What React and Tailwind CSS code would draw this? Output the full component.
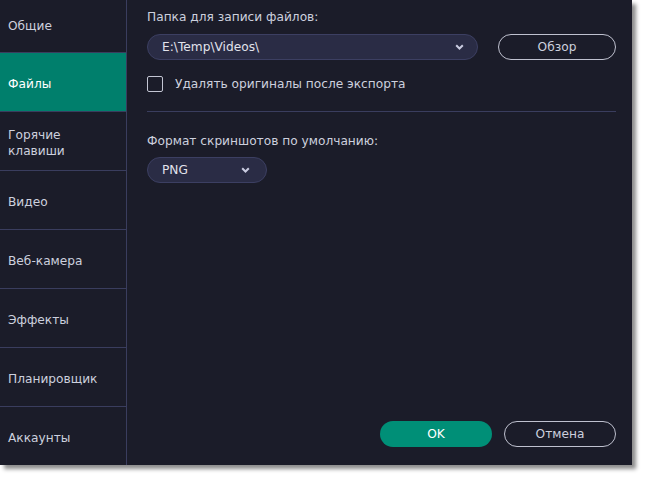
import React from "react";

const navItems = [
  { label: "Общие", h: "h-[53px]", first: true },
  { label: "Файлы", h: "h-[59px]", active: true },
  { label: "Горячие клавиши", h: "h-[59px]", two: true },
  { label: "Видео", h: "h-[59px]" },
  { label: "Веб-камера", h: "h-[59px]" },
  { label: "Эффекты", h: "h-[59px]" },
  { label: "Планировщик", h: "h-[59px]" },
  { label: "Аккаунты", h: "h-[58px]", last: true },
];

const Chevron = () => (
  <svg width="9" height="6" viewBox="0 0 9 6" className="text-[#c9cbe0]">
    <path d="M1.2 1.2 L4.5 4.5 L7.8 1.2" fill="none" stroke="currentColor" strokeWidth="2" />
  </svg>
);

export default function App() {
  return (
    <div className="w-[647px] h-[481px] bg-white" style={{ fontFamily: "'DejaVu Sans', Verdana, sans-serif" }}>
      <div className="w-[632px] h-[465px] bg-[#1b1c29] flex shadow-[4px_4px_4px_rgba(0,0,0,0.45)] text-[12.2px] text-[#cdd0de]">
        {/* sidebar */}
        <div className="w-[127px] border-r border-[#3a3d5e] flex flex-col">
          {navItems.map((it) => (
            <div
              key={it.label}
              className={
                "flex items-center px-2 leading-[16px] " +
                it.h +
                (it.first ? "" : " pt-[4px]") +
                (it.last ? "" : " border-b border-[#3a3d5e]") +
                (it.active ? " bg-[#007f6c] text-white" : "")
              }
            >
              {it.two ? (
                <span>
                  Горячие
                  <br />
                  клавиши
                </span>
              ) : (
                it.label
              )}
            </div>
          ))}
        </div>

        {/* content */}
        <div className="flex-1 flex flex-col pl-[20px] pr-[16px] pt-[9px] pb-[18px]">
          <div className="leading-[16px]">Папка для записи файлов:</div>
          <div className="flex items-center gap-[20px] mt-[9px]">
            <div className="w-[331px] h-[26px] rounded-full bg-[#2a2c45] border border-[#3c3f62] flex items-center justify-between pl-[14px] pr-[13px] text-[#e2e3ec]">
              <span>E:\Temp\Videos\</span>
              <Chevron />
            </div>
            <div className="w-[118px] h-[26px] rounded-full border border-[#bfc1cf] flex items-center justify-center">
              Обзор
            </div>
          </div>
          <div className="flex items-center gap-[12px] mt-[15px]">
            <div className="w-[16px] h-[16px] rounded-[2px] border border-[#c3c5d3]" />
            <span>Удалять оригиналы после экспорта</span>
          </div>
          <div className="h-px bg-[#3a3d5e] mt-[18px]" />
          <div className="leading-[16px] mt-[21px]">Формат скриншотов по умолчанию:</div>
          <div className="w-[120px] h-[26px] mt-[8px] rounded-full bg-[#2a2c45] border border-[#3c3f62] flex items-center justify-between pl-[14px] pr-[16px] text-[#e2e3ec]">
            <span>PNG</span>
            <Chevron />
          </div>
          <div className="flex-1" />
          <div className="flex justify-end gap-[12px]">
            <div className="w-[112px] h-[26px] rounded-full bg-[#008f77] text-white flex items-center justify-center">
              OK
            </div>
            <div className="w-[112px] h-[26px] rounded-full border border-[#bfc1cf] flex items-center justify-center">
              Отмена
            </div>
          </div>
        </div>
      </div>
    </div>
  );
}
